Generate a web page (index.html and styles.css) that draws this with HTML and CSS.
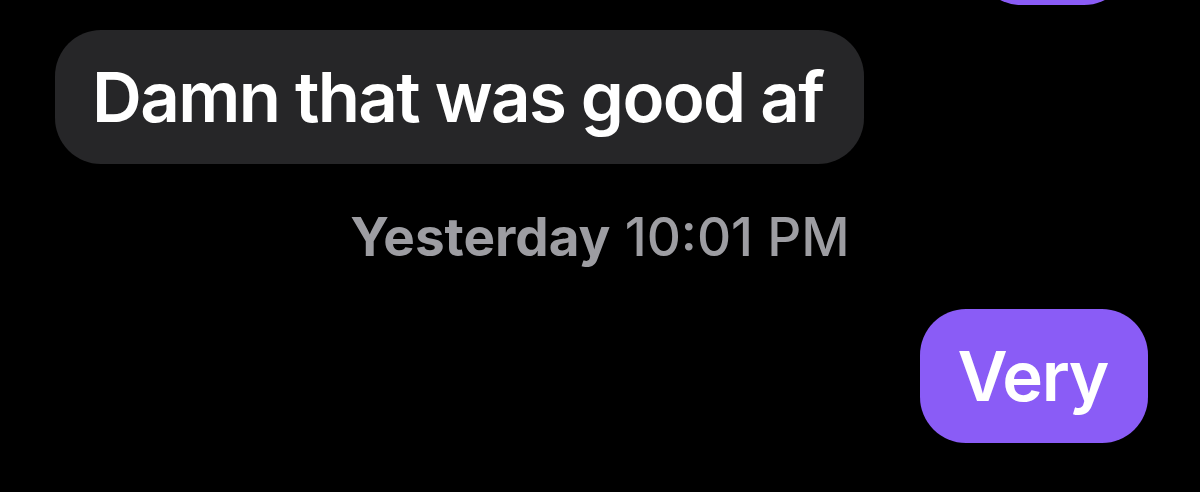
FILE: index.html
```html
<!DOCTYPE html>
<html>
<head>
<meta charset="utf-8">
<link rel="stylesheet" href="styles.css">
</head>
<body>
<div class="thread">
  <div class="row out">
    <div class="bubble sent prev"></div>
  </div>
  <div class="row in">
    <div class="bubble recv">Damn that was good af</div>
  </div>
  <div class="stamp"><span class="day">Yesterday</span> 10:01 PM</div>
  <div class="row out last">
    <div class="bubble sent">Very</div>
  </div>
</div>
</body>
</html>
```
FILE: styles.css
```css
html, body {
  margin: 0;
  padding: 0;
  background: #000;
}
body {
  width: 1200px;
  height: 492px;
  overflow: hidden;
  font-family: Inter, "Liberation Sans", sans-serif;
}
.thread {
  display: flex;
  flex-direction: column;
}
.row {
  display: flex;
}
.row.in {
  justify-content: flex-start;
  padding-left: 55px;
  margin-top: 25px;
}
.row.out {
  justify-content: flex-end;
  padding-right: 52px;
}
.bubble {
  height: 134px;
  box-sizing: border-box;
  display: flex;
  align-items: center;
  border-radius: 46px;
  color: #fff;
  font-size: 69px;
  font-weight: 600;
  letter-spacing: -1.4px;
  white-space: nowrap;
}
.recv {
  background: #262628;
  padding: 0 41px 0 37px;
  letter-spacing: -1.65px;
}
.sent {
  background: #8a5cf6;
  padding: 0 40px 0 38px;
}
.prev {
  margin-top: -129px;
  margin-right: 18px;
  width: 155px;
}
.stamp {
  text-align: center;
  color: #9d9da2;
  font-size: 53px;
  font-weight: 500;
  margin-top: 43px;
  line-height: 60px;
  letter-spacing: 0;
}
.day {
  font-weight: 700;
}
.row.last {
  margin-top: 42px;
}
```
